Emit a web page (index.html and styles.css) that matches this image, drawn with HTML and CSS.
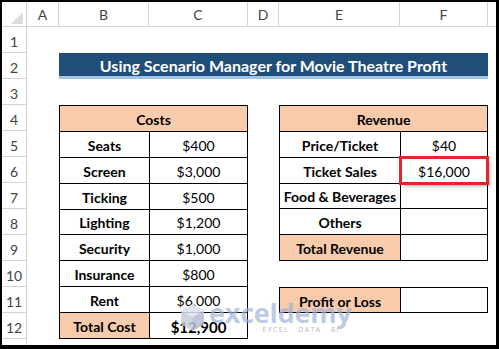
FILE: index.html
```html
<!DOCTYPE html>
<html>
<head>
<meta charset="utf-8">
<link rel="stylesheet" href="styles.css">
</head>
<body>
<div class="frame">
  <div class="sheet">
    <div class="corner"><span class="tri"></span></div>
    <div class="colhdr">A</div>
    <div class="colhdr">B</div>
    <div class="colhdr">C</div>
    <div class="colhdr">D</div>
    <div class="colhdr">E</div>
    <div class="colhdr">F</div>
    <div class="colhdr last"></div>

    <div class="rowhdr">1</div>
    <div class="rowhdr">2</div>
    <div class="rowhdr">3</div>
    <div class="rowhdr">4</div>
    <div class="rowhdr">5</div>
    <div class="rowhdr">6</div>
    <div class="rowhdr">7</div>
    <div class="rowhdr">8</div>
    <div class="rowhdr">9</div>
    <div class="rowhdr">10</div>
    <div class="rowhdr">11</div>
    <div class="rowhdr">12</div>
    <div class="rowhdr last"></div>

    <div class="title">Using Scenario Manager for Movie Theatre Profit</div>

    <div class="tbl costs">
      <div class="cell head span2">Costs</div>
      <div class="cell b">Seats</div><div class="cell">$400</div>
      <div class="cell b">Screen</div><div class="cell">$3,000</div>
      <div class="cell b">Ticking</div><div class="cell">$500</div>
      <div class="cell b">Lighting</div><div class="cell">$1,200</div>
      <div class="cell b">Security</div><div class="cell">$1,000</div>
      <div class="cell b">Insurance</div><div class="cell">$800</div>
      <div class="cell b">Rent</div><div class="cell">$6,000</div>
      <div class="cell head">Total Cost</div><div class="cell b big">$12,900</div>
    </div>

    <div class="tbl revenue">
      <div class="cell head span2">Revenue</div>
      <div class="cell b">Price/Ticket</div><div class="cell">$40</div>
      <div class="cell b">Ticket Sales</div><div class="cell hl">$16,000</div>
      <div class="cell b">Food &amp; Beverages</div><div class="cell"></div>
      <div class="cell b">Others</div><div class="cell"></div>
      <div class="cell head">Total Revenue</div><div class="cell"></div>
    </div>

    <div class="tbl profit">
      <div class="cell head">Profit or Loss</div><div class="cell"></div>
    </div>
  </div>

  <div class="watermark">
    <svg class="wm-icon" width="25" height="29" viewBox="0 0 24 28">
      <polygon points="12,1 23,7.5 23,20.5 12,27 1,20.5 1,7.5" fill="#c6cedd"/>
      <polygon points="12,1 23,7.5 12,14 1,7.5" fill="#dce1eb"/>
      <polygon points="12,14 23,7.5 23,20.5 12,27" fill="#b4bed2"/>
    </svg>
    <div class="wm-text">
      <span class="wm-name">exceldemy</span>
      <span class="wm-sub">EXCEL · DATA · BI</span>
    </div>
  </div>
</div>
</body>
</html>
```
FILE: styles.css
```css
* { box-sizing: border-box; }
html, body { margin: 0; padding: 0; background: #fff; }

.frame {
  position: relative;
  width: 499px;
  height: 349px;
  border-style: solid;
  border-color: #000;
  border-width: 2px 3px 4px 2px;
  overflow: hidden;
  font-family: "Lato", "Liberation Sans", sans-serif;
}

.sheet {
  display: grid;
  grid-template-columns: 25px 32px 90px 99px 31px 121px 88px 1fr;
  grid-template-rows: 25px repeat(12, 26px) 1fr;
  height: 100%;
}

.corner {
  grid-row: 1;
  grid-column: 1;
  position: relative;
  border-right: 1px solid #d4d4d4;
  border-bottom: 1px solid #d4d4d4;
}
.tri {
  position: absolute;
  right: 3px;
  bottom: 2px;
  width: 0;
  height: 0;
  border-left: 12px solid transparent;
  border-bottom: 12px solid #dcdcdc;
}

.colhdr {
  grid-row: 1;
  display: flex;
  align-items: center;
  justify-content: center;
  border-right: 1px solid #d4d4d4;
  border-bottom: 1px solid #d4d4d4;
  color: #444;
  font-size: 14px;
  padding-top: 1px;
}
.colhdr.last { border-right: none; }

.rowhdr {
  grid-column: 1;
  display: flex;
  align-items: center;
  justify-content: center;
  border-right: 1px solid #d4d4d4;
  border-bottom: 1px solid #d4d4d4;
  color: #444;
  font-size: 14px;
  padding-top: 3px;
}
.rowhdr.last { border-bottom: none; }

.title {
  grid-column: 3 / 8;
  grid-row: 3;
  background: #1f4e78;
  border-bottom: 3px solid #9dc3e6;
  color: #fff;
  font-weight: 700;
  font-size: 16px;
  display: flex;
  align-items: center;
  justify-content: center;
  padding-top: 2px;
}

.tbl {
  display: grid;
  background: #000;
  padding: 1px;
  gap: 1px;
  grid-auto-rows: 1fr;
}
.costs {
  grid-column: 3 / 5;
  grid-row: 5 / 14;
  grid-template-columns: 89px 1fr;
}
.revenue {
  grid-column: 6 / 8;
  grid-row: 5 / 11;
  grid-template-columns: 120px 1fr;
}
.profit {
  grid-column: 6 / 8;
  grid-row: 12;
  grid-template-columns: 120px 1fr;
}

.cell {
  background: #fff;
  display: flex;
  align-items: center;
  justify-content: center;
  font-size: 14px;
  color: #000;
  padding-top: 2px;
  white-space: nowrap;
}
.cell.b { font-weight: 700; }
.cell.big { font-size: 15px; }
.cell.head { background: #f8cbad; font-weight: 700; }
.cell.span2 { grid-column: span 2; }
.cell.hl {
  position: relative;
  z-index: 2;
  outline: 3px solid #e8232a;
  outline-offset: -1px;
  box-shadow: 3px 3px 3px rgba(0, 0, 0, 0.35);
}

.watermark {
  position: absolute;
  left: 178px;
  top: 298px;
  display: flex;
  align-items: flex-start;
  gap: 4px;
  pointer-events: none;
}
.wm-icon { margin-top: 3px; opacity: 0.85; }
.wm-text {
  display: flex;
  flex-direction: column;
  align-items: flex-end;
}
.wm-name {
  font-family: "Open Sans", sans-serif;
  font-weight: 700;
  font-size: 27px;
  line-height: 25px;
  color: rgba(160, 178, 215, 0.7);
  letter-spacing: -0.2px;
}
.wm-sub {
  font-family: "Open Sans", sans-serif;
  font-size: 7px;
  letter-spacing: 1.3px;
  color: rgba(150, 156, 170, 0.75);
  line-height: 9px;
  margin-right: 12px;
}
```
